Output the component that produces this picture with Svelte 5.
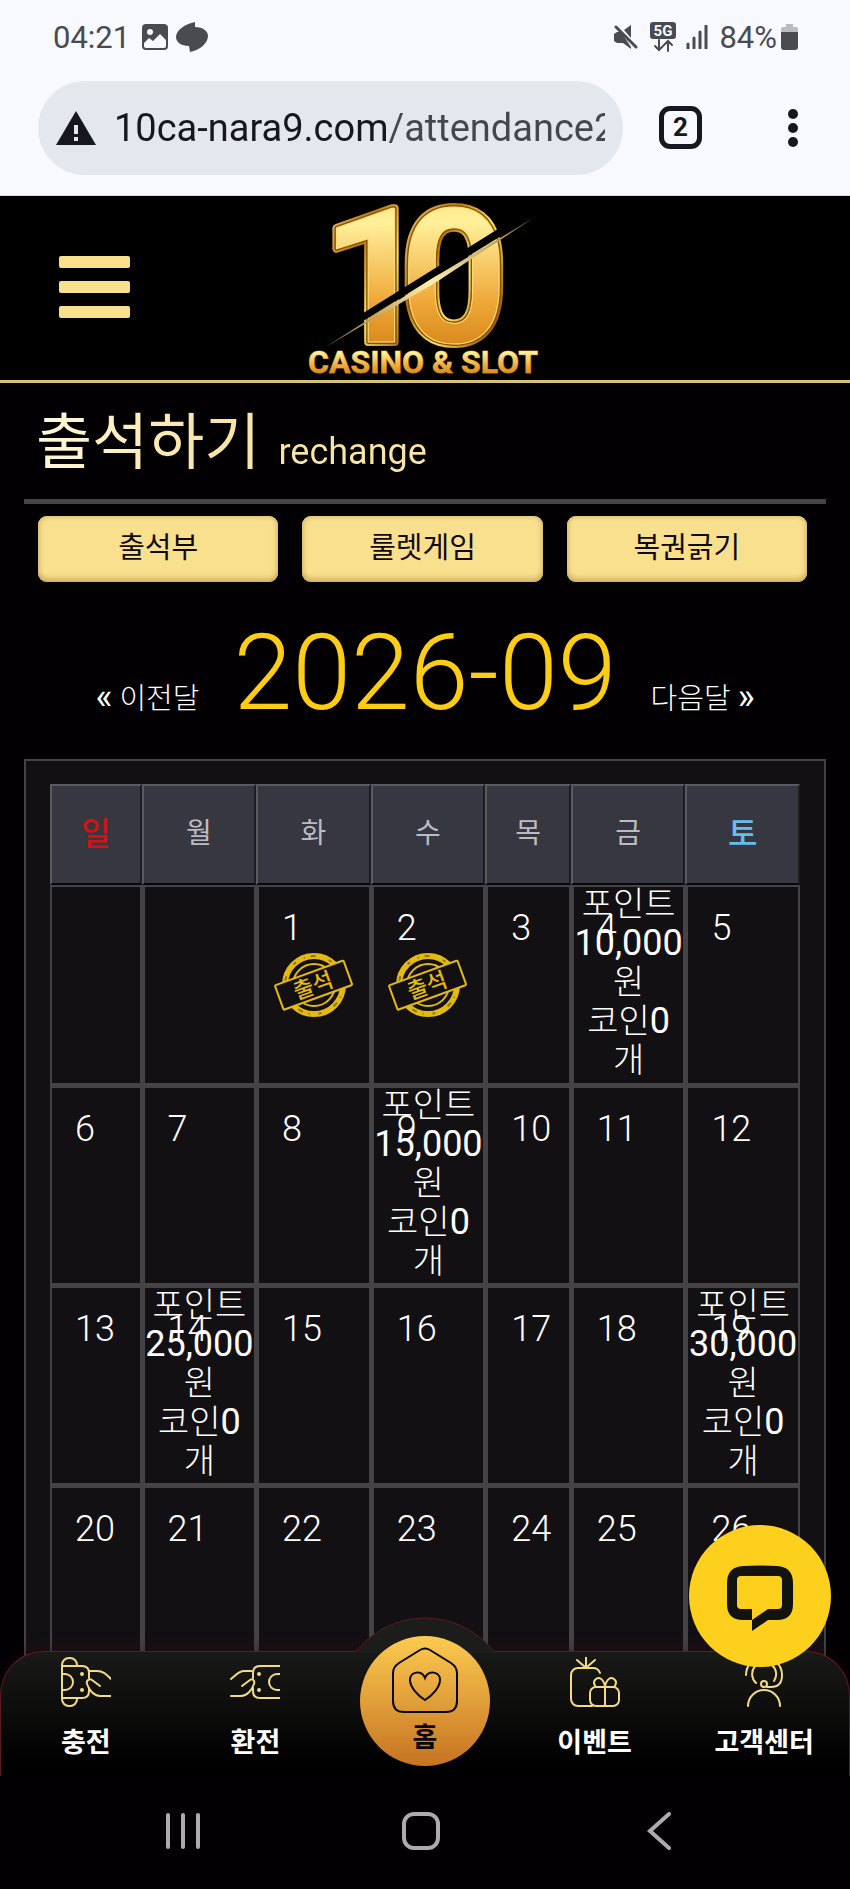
<script lang="ts">
	type Day = { n?: number; stamped?: boolean; reward?: string };

	const tabs = ['출석부', '룰렛게임', '복권긁기'];
	const weekdays = ['일', '월', '화', '수', '목', '금', '토'];

	const stamped = [1, 2];
	const rewards: Record<number, string> = {
		4: '10,000',
		9: '15,000',
		14: '25,000',
		19: '30,000'
	};

	// the month starts on a Tuesday
	const firstDay = 2;
	const weeks: Day[][] = [0, 1, 2, 3].map((w) =>
		weekdays.map((_, d) => {
			const n = w * 7 + d - firstDay + 1;
			return n > 0 ? { n, stamped: stamped.includes(n), reward: rewards[n] } : {};
		})
	);
</script>

<div class="screen">
	<div class="status">
		<span>04:21</span>
		<svg class="status-photo" width="26" height="26" viewBox="0 0 26 26">
			<rect width="26" height="26" rx="4" />
			<circle cx="8" cy="8" r="3" class="cut" />
			<path class="cut" d="M2 19l5-5 4 3 7-7 6 6v6q0 2-2 2H4q-2 0-2-2z" />
		</svg>
		<svg width="32" height="30" viewBox="0 0 32 30">
			<path d="M19 0v5c8 0 13 4 13 9 0 7-8 14-18 16l-1-6C5 24 0 20 0 15 0 8 9 2 19 0z" />
		</svg>
		<span class="spacer"></span>
		<svg class="status-mute" width="24" height="24" viewBox="0 0 24 24">
			<path d="M0 9l3-2h4l10 15v2l-8-6H3l-3-2zM10 5l7-5v13z" />
			<path d="M2 2l20 20" class="line" />
		</svg>
		<svg class="status-net" width="26" height="30" viewBox="0 0 26 30">
			<rect width="26" height="17" rx="3" />
			<text x="13" y="14" text-anchor="middle">5G</text>
			<path class="line thin" d="M9 18v10M5 24l4 4 4-4M18 29V19M14 23l4-4 4 4" />
		</svg>
		<svg class="status-signal" width="22" height="24" viewBox="0 0 22 24">
			<path class="line" d="M2 19v4M8 13v10M14 7v16M20 1v22" />
		</svg>
		<span>84%</span>
		<svg class="status-battery" width="17" height="26" viewBox="0 0 17 26">
			<path opacity=".35" d="M5 0h7v3h3q2 0 2 2v4H0V5q0-2 2-2h3z" />
			<path d="M0 8h17v15q0 3-3 3H3q-3 0-3-3z" />
		</svg>
	</div>

	<div class="browser">
		<div class="omnibox">
			<svg width="40" height="34" viewBox="0 0 40 34">
				<path fill="#17181f" d="M20 0l20 34H0z" />
				<path stroke="#e5e7ef" stroke-width="4" d="M20 14v9M20 26v4" />
			</svg>
			<input aria-label="URL" value="10ca-nara9.com/attendance2" readonly />
		</div>
		<button class="tab-count">2</button>
		<button class="kebab" aria-label="Menu"><i></i><i></i><i></i></button>
	</div>

	<header>
		<button class="burger" aria-label="메뉴"><i></i><i></i><i></i></button>
		<a class="logo" href="#home" aria-label="10 Casino & Slot">
			<svg width="240" height="180" viewBox="0 0 240 180">
				<defs>
					<linearGradient id="gold" x1="0" y1="0" x2="0" y2="1">
						<stop offset="0" stop-color="#ffe27a" />
						<stop offset=".25" stop-color="#fff09a" />
						<stop offset=".6" stop-color="#f0a93a" />
						<stop offset=".8" stop-color="#d98a1c" />
						<stop offset="1" stop-color="#ffd84a" />
					</linearGradient>
					<linearGradient id="rim" x1="0" y1="0" x2="1" y2="1">
						<stop offset="0" stop-color="#fff2a8" />
						<stop offset=".35" stop-color="#b8740e" />
						<stop offset=".55" stop-color="#ffe36a" />
						<stop offset=".8" stop-color="#9c5a08" />
						<stop offset="1" stop-color="#ffcf3a" />
					</linearGradient>
					<linearGradient id="blade" x1="0" y1="1" x2="1" y2="0">
						<stop offset="0" stop-color="#7d6430" />
						<stop offset=".5" stop-color="#fff0b0" />
						<stop offset="1" stop-color="#8b7235" />
					</linearGradient>
				</defs>
				<g class="ten">
					<text x="16" y="145" stroke="url(#rim)" stroke-width="8">1</text>
					<text x="95" y="145" stroke="url(#rim)" stroke-width="8">0</text>
					<text x="16" y="145" stroke="#8c5208" stroke-width="4">1</text>
					<text x="95" y="145" stroke="#8c5208" stroke-width="4">0</text>
					<text x="16" y="145" stroke="#ffe27a" stroke-width="1" fill="url(#gold)">1</text>
					<text x="95" y="145" stroke="#ffe27a" stroke-width="1" fill="url(#gold)">0</text>
				</g>
				<path fill="#000" d="M16 150L230 18 206 24 10 146z" />
				<path fill="url(#blade)" d="M19 151L128 81 230 20 130 86z" />
				<text class="brand" x="118" y="176" text-anchor="middle">CASINO &amp; SLOT</text>
			</svg>
		</a>
	</header>

	<div class="view">
		<main>
			<h1>출석하기 <small>rechange</small></h1>

			<div class="tabs">
				{#each tabs as tab}
					<button>{tab}</button>
				{/each}
			</div>

			<div class="month">
				<a href="#prev"><span>«</span> 이전달</a>
				<h2>2026-09</h2>
				<a href="#next">다음달 <span>»</span></a>
			</div>

			<div class="calendar">
				<table>
					<thead>
						<tr>
							{#each weekdays as day, i}
								<th class:sun={i === 0} class:thu={i === 4} class:sat={i === 6}>{day}</th>
							{/each}
						</tr>
					</thead>
					<tbody>
						{#each weeks as week}
							<tr>
								{#each week as day}
									<td>
										{#if day.n}
											<div class="num">{day.n}</div>
										{/if}
										{#if day.stamped}
											<svg class="stamp" width="84" height="68" viewBox="0 0 84 68">
												<circle cx="42" cy="34" r="29" stroke-width="6" />
												<circle cx="42" cy="34" r="29" class="grain" />
												<circle cx="42" cy="34" r="21" stroke-width="2" />
												<g transform="rotate(-20 42 34)">
													<rect x="5" y="21" width="73" height="26" rx="1" stroke-width="2" />
													<text x="41" y="42" text-anchor="middle">출석</text>
												</g>
											</svg>
										{/if}
										{#if day.reward}
											<div class="reward">
												포인트<br /><b>{day.reward}</b><br />원<br />코인<b>0</b><br />개
											</div>
										{/if}
									</td>
								{/each}
							</tr>
						{/each}
					</tbody>
				</table>
			</div>
		</main>

		<nav>
			<svg class="hump" width="140" height="36" viewBox="0 0 140 36">
				<path fill="#1c1c1b" d="M0 36V34Q1 34 3 32A88 88 0 0 1 137 32Q139 34 140 34V36z" />
				<path fill="none" stroke="#5c1a24" d="M0 34Q1 34 3 32A88 88 0 0 1 137 32Q139 34 140 34" />
			</svg>
			<a href="#charge">
				<svg width="50" height="50" viewBox="0 0 50 50">
					<path d="M1 9V8a7 7 0 0 1 7-7h1a7 7 0 0 1 7 7M1 8v34a7 7 0 0 0 7 7h1a7 7 0 0 0 7-7M1 9h20q7 0 7 7v5M1 41h20q7 0 7-7v-3" />
					<path d="M1 17h3a8 8 0 0 1 0 16H1M28 14h8c6 0 9 3 14 8M39 29l-8-6c-3-2-6 1-5 4 2 6 7 12 13 12h11" />
					<circle cx="21" cy="17" r="1" /><circle cx="21" cy="33" r="1" />
				</svg>
				<span>충전</span>
			</a>
			<a href="#withdraw">
				<svg width="50" height="50" viewBox="0 0 50 50">
					<path d="M50 9H30q-7 0-7 7v5M50 41H30q-7 0-7-7v-3" />
					<path d="M50 17h-3a8 8 0 0 0 0 16h3M22 14h-8C9 14 6 18 1 22M12 29l8-6c3-2 5 1 4 4-2 6-7 12-13 12H1" />
					<circle cx="29" cy="17" r="1" /><circle cx="29" cy="33" r="1" />
				</svg>
				<span>환전</span>
			</a>
			<a href="#home" class="home">
				<svg width="66" height="66" viewBox="0 0 66 66">
					<path d="M28 3q5-3 10 0l21 13q6 4 6 10v28q0 11-11 11H12Q1 65 1 54V26q0-6 6-10z" />
					<path d="M33 31c-3-8-15-7-15 2 0 7 8 16 15 20 7-4 15-13 15-20 0-9-12-10-15-2z" />
				</svg>
				<span>홈</span>
			</a>
			<a href="#event">
				<svg width="50" height="50" viewBox="0 0 50 50">
					<path d="M22 49H8a7 7 0 0 1-7-7V18a7 7 0 0 1 7-7h15c4 0 6 2 7 5M16 10V0M15 10L7 3M17 10l8-7" />
					<rect x="20" y="30" width="29" height="19" rx="6" />
					<path d="M35 49V29c-2-8-6-9-9-7-4 3-1 7 0 8M35 29c2-8 6-9 9-7 4 3 1 7 0 8" />
				</svg>
				<span>이벤트</span>
			</a>
			<a href="#support">
				<svg width="50" height="50" viewBox="0 0 50 50">
					<path d="M9 49a16 16 0 0 1 32 0M7 18a18 18 0 0 1 36 0c0 8-4 12-11 12h-4" />
					<path d="M17 26a12 12 0 1 1 18-2" />
					<circle cx="25" cy="27" r="3" />
				</svg>
				<span>고객센터</span>
			</a>
		</nav>

		<button class="chat" aria-label="Chat">
			<svg width="142" height="142" viewBox="0 0 142 142">
				<path
					fill-rule="evenodd"
					d="M54 41Q71 40 88 41q16 1 16 17v21q0 16-16 16h-9l-16 11V95h-9q-16 0-16-16V58q0-16 16-17zM52 51q-4 0-4 4v25q0 4 4 4h11v11l16-11h10q4 0 4-4V55q0-4-4-4z"
				/>
			</svg>
		</button>
	</div>

	<div class="system">
		<button aria-label="Recents">
			<svg width="38" height="38" viewBox="0 0 38 38"><path d="M4 3v32M19 3v32M34 3v32" /></svg>
		</button>
		<button aria-label="Home">
			<svg width="38" height="38" viewBox="0 0 38 38"><rect x="2" y="2" width="34" height="34" rx="10" /></svg>
		</button>
		<button aria-label="Back">
			<svg width="38" height="38" viewBox="0 0 38 38"><path d="M29 2L10 19l19 17" /></svg>
		</button>
	</div>
</div>

<style>
	:global(body) {
		background: #000;
	}

	.screen {
		display: flex;
		flex-direction: column;
		height: 100vh;
		overflow: hidden;
		color: #fff;
		font-family: Roboto, 'Noto Sans CJK KR', sans-serif;
	}

	button {
		padding: 0;
		border: 0;
		background: none;
		color: inherit;
		font: inherit;
	}

	a {
		color: inherit;
		text-decoration: none;
	}

	svg {
		display: block;
		flex: none;
	}

	/* phone status bar */
	.status {
		display: flex;
		align-items: center;
		height: 74px;
		padding: 2px 52px 2px 53px;
		box-sizing: border-box;
		background: #f8f9fe;
		color: #4a4b4f;
		fill: #4a4b4f;
		font-size: 31px;
	}

	.status .cut {
		fill: #f8f9fe;
	}

	.status .line {
		fill: none;
		stroke: #4a4b4f;
		stroke-width: 3;
		stroke-linecap: round;
	}

	.status .thin {
		stroke-width: 2;
	}

	.status text {
		fill: #f8f9fe;
		font-size: 15px;
		font-weight: 700;
	}

	.status-photo {
		margin: 0 8px 0 12px;
	}

	.spacer {
		flex: 1;
	}

	.status-net {
		margin: 0 10px 0 12px;
	}

	.status-signal {
		margin-right: 11px;
	}

	.status-battery {
		margin-left: 4px;
	}

	/* browser bar */
	.browser {
		display: flex;
		align-items: center;
		height: 122px;
		padding: 7px 52px 21px 38px;
		box-sizing: border-box;
		border-bottom: 1px solid #dcdde2;
		background: #f8f9fe;
		color: #17181f;
	}

	.omnibox {
		display: flex;
		flex: 1;
		align-items: center;
		gap: 18px;
		height: 94px;
		padding: 0 18px;
		box-sizing: border-box;
		border-radius: 47px;
		background: linear-gradient(#e4e9eb, #e5e7ef 30%);
		min-width: 0;
	}

	.omnibox input {
		flex: 1;
		min-width: 0;
		height: 60px;
		padding: 0;
		border: 0;
		outline: 0;
		background: linear-gradient(90deg, #17181f 274px, #45474f 274px);
		-webkit-background-clip: text;
		background-clip: text;
		color: transparent;
		font: 38px Roboto, sans-serif;
	}

	.tab-count {
		width: 43px;
		height: 43px;
		margin: 0 86px 0 36px;
		border: 5px solid #17181f;
		border-radius: 11px;
		font-size: 26px;
		font-weight: 700;
		line-height: 33px;
	}

	.kebab {
		display: grid;
		gap: 4px;
	}

	.kebab i {
		width: 10px;
		height: 10px;
		border-radius: 50%;
		background: #17181f;
	}

	/* site header */
	header {
		display: grid;
		grid-template-columns: 1fr auto 1fr;
		align-items: center;
		height: 187px;
		padding: 0 59px 2px;
		box-sizing: border-box;
		border-bottom: 3px solid #d9c07a;
		background: #000;
	}

	.burger {
		display: grid;
		gap: 13px;
		width: 71px;
	}

	.burger i {
		height: 12px;
		border-radius: 2px;
		background: #f9e08c;
	}

	.logo svg {
		overflow: visible;
	}

	.ten {
		fill: none;
		font-size: 188px;
		font-weight: 700;
		stroke-linejoin: round;
	}

	.brand {
		fill: url(#gold);
		stroke: #a8690c;
		stroke-width: 1px;
		paint-order: stroke;
		font-size: 32px;
		font-weight: 700;
	}

	.view {
		position: relative;
		flex: 1;
		min-height: 0;
		overflow: hidden;
		background: #020003;
	}

	main {
		padding: 0 24px;
	}

	h1 {
		display: flex;
		align-items: baseline;
		gap: 18px;
		height: 121px;
		margin: 0;
		padding: 15px 12px 0;
		box-sizing: border-box;
		border-bottom: 5px solid #464347;
		font-size: 61px;
		font-weight: 400;
		line-height: 90px;
		background: linear-gradient(100deg, #fffbe0, #f8e4a4 200px);
		-webkit-background-clip: text;
		background-clip: text;
		color: transparent;
	}

	h1 small {
		font-size: 36px;
		font-weight: 400;
	}

	.tabs {
		display: flex;
		gap: 24px;
		padding: 12px 19px 0 14px;
	}

	.tabs button {
		flex: 1;
		height: 66px;
		padding-bottom: 8px;
		border-radius: 9px;
		background: #f9e08f;
		box-shadow: inset 0 -3px 6px #c9a95a, inset 0 2px 4px #e6cb80;
		color: #120a08;
		font-size: 29px;
	}

	.month {
		display: flex;
		align-items: baseline;
		justify-content: center;
		gap: 34px;
		height: 177px;
		font-size: 29px;
		font-weight: 300;
		line-height: 182px;
	}

	.month span {
		font-size: 36px;
		font-weight: 400;
	}

	h2 {
		margin: 0;
		color: #fccd14;
		font-size: 106px;
		font-weight: 300;
	}

	.calendar {
		padding: 23px 24px;
		border: 2px solid #464347;
		background: #121013;
	}

	table {
		width: 100%;
		border-spacing: 0;
		table-layout: fixed;
	}

	th {
		height: 101px;
		padding: 0 0 8px;
		box-sizing: border-box;
		border: 2px solid;
		border-color: #5a5b61 #1b1b20 #08080a #5a5b61;
		background: #363740;
		color: #bcbcc0;
		font-size: 28px;
		font-weight: 400;
	}

	th.sun {
		width: 12.2%;
		color: #d31212;
		font-size: 32px;
		font-weight: 500;
	}

	th.thu {
		width: 11.4%;
	}

	th.sat {
		color: #66bdf0;
		font-size: 32px;
		font-weight: 500;
	}

	td {
		position: relative;
		height: 200px;
		padding: 0;
		box-sizing: border-box;
		border: 2px solid #464347;
		vertical-align: top;
	}

	td + td {
		border-left-width: 3px;
	}

	tr + tr td {
		border-top-width: 3px;
	}

	.num {
		padding: 20px 0 0 23px;
		font-size: 36px;
		font-weight: 300;
		line-height: 42px;
	}

	.stamp {
		margin: 2px auto 0;
		fill: none;
		stroke: #e3b913;
	}

	.stamp .grain {
		stroke: #8f7410;
		stroke-width: 2;
		stroke-dasharray: 3 9 1 6 5 14;
	}

	.stamp rect {
		fill: #121013;
	}

	.stamp text {
		fill: #e3b913;
		stroke: none;
		font-size: 22px;
		font-weight: 500;
	}

	.reward {
		position: absolute;
		inset: -2px 0 0;
		font-size: 34px;
		font-weight: 300;
		line-height: 39px;
		text-align: center;
		white-space: nowrap;
	}

	.reward b {
		font-size: 36px;
		font-weight: 400;
		line-height: 36px;
	}

	/* bottom menu, drawn over the page */
	nav {
		position: absolute;
		right: 0;
		bottom: 0;
		left: 0;
		display: grid;
		grid-template-columns: repeat(5, 1fr);
		height: 125px;
		box-sizing: border-box;
		border: 1px solid #5c1a24;
		border-bottom: 0;
		border-radius: 44px 44px 0 0;
		background: linear-gradient(#191a18, #000 90%);
		box-shadow: 0 -4px 14px rgba(60, 10, 16, 0.35);
	}

	nav a {
		position: relative;
		display: flex;
		flex-direction: column;
		align-items: center;
		gap: 16px;
		padding-top: 5px;
		font-size: 27px;
		font-weight: 700;
		line-height: 40px;
	}

	nav a svg {
		fill: none;
		stroke: #f3da86;
		stroke-width: 2;
		stroke-linecap: round;
	}

	.hump {
		position: absolute;
		top: -35px;
		left: 50%;
		margin-left: -70px;
	}

	nav .home {
		justify-self: center;
		width: 130px;
		height: 130px;
		margin-top: -16px;
		padding-top: 11px;
		gap: 5px;
		box-sizing: border-box;
		border-radius: 50%;
		background: linear-gradient(#fccb50, #c67322);
		color: #0a0705;
	}

	nav .home svg {
		stroke: #0a0705;
	}

	.chat {
		position: absolute;
		right: 19px;
		bottom: 109px;
		border-radius: 50%;
		background: #fdd01e;
		fill: #12120f;
	}

	.system {
		display: flex;
		justify-content: space-around;
		align-items: center;
		height: 113px;
		padding: 0 72px 4px 64px;
		box-sizing: border-box;
		background: #020003;
	}

	.system svg {
		fill: none;
		stroke: #adabb0;
		stroke-width: 4;
		stroke-linecap: round;
	}
</style>
